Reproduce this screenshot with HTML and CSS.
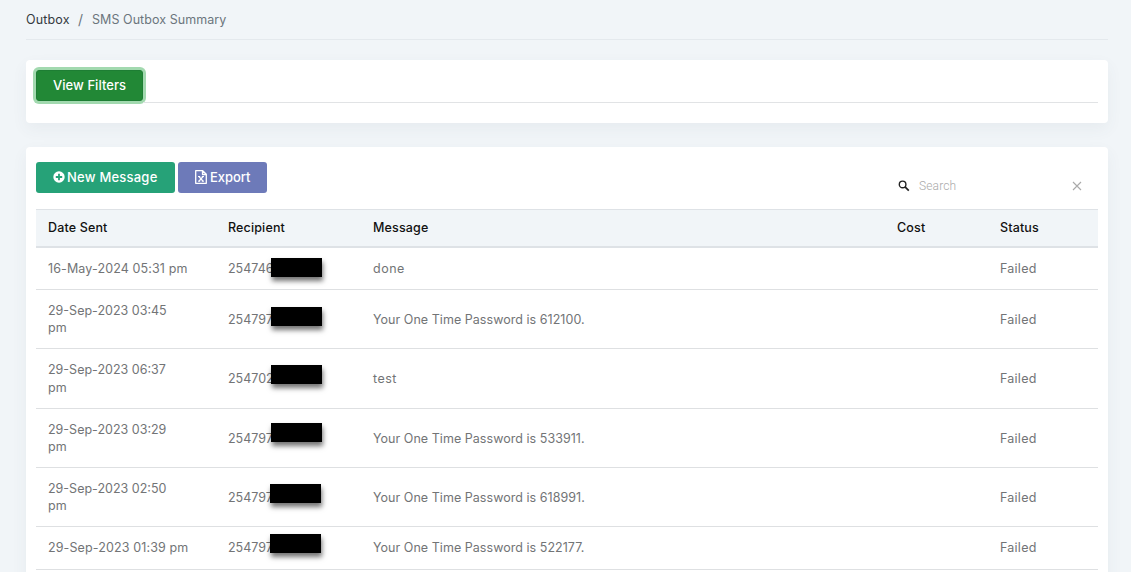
FILE: index.html
```html
<!DOCTYPE html>
<html lang="en">
<head>
<meta charset="utf-8">
<title>SMS Outbox Summary</title>
<link rel="stylesheet" href="styles.css">
</head>
<body>
<main class="page">
  <nav class="breadcrumb"><a class="crumb-root">Outbox</a><span class="crumb-sep">/</span><span class="crumb-current">SMS Outbox Summary</span></nav>

  <section class="card filters">
    <button class="btn btn-filter"><span>View Filters</span></button>
    <div class="rule"></div>
  </section>

  <section class="card outbox">
    <div class="toolbar">
      <button class="btn btn-new">
        <svg class="icon-plus" width="12" height="12" viewBox="0 0 12 12"><circle cx="6" cy="6" r="5.7" fill="#fff"/><path d="M6 2.8v6.4M2.8 6h6.4" stroke="#26a278" stroke-width="1.8"/></svg>
        <span class="new-label">New Message</span>
      </button>
      <button class="btn btn-export">
        <svg class="icon-file" width="12" height="14" viewBox="0 0 12 14" fill="none" stroke="#fff"><path d="M.7.7h7l3.6 3.6v9H.7zM7.5.7v3.8h3.8" stroke-width="1.3" stroke-linejoin="round"/><path d="M4 6.6l4 4.5M8 6.6l-4 4.5" stroke-width="1.4"/><path d="M3 6.5h2.2M6.8 6.5H9M3 11.2h2.2M6.8 11.2H9" stroke-width="1"/></svg>
        <span class="export-label">Export</span>
      </button>
      <div class="search">
        <svg class="icon-search" width="12" height="12" viewBox="0 0 12 12" fill="none" stroke="#222"><circle cx="4.6" cy="4.4" r="3.3" stroke-width="1.4"/><path d="M7 6.9l3.8 3.8" stroke-width="1.7"/></svg>
        <span class="search-text">Search</span>
        <svg class="icon-clear" width="10" height="10" viewBox="0 0 10 10" stroke="#aaa" stroke-width="1.1"><path d="M1 1l8 8M9 1L1 9"/></svg>
      </div>
    </div>

    <table class="messages">
      <colgroup><col class="c-date"><col class="c-recipient"><col class="c-message"><col class="c-cost"><col class="c-status"></colgroup>
      <thead>
        <tr><th>Date Sent</th><th>Recipient</th><th>Message</th><th>Cost</th><th>Status</th></tr>
      </thead>
      <tbody>
        <tr class="r42"><td><span class="date-one">16-May-2024 05:31 pm</span></td><td><div class="phone"><span>254746</span><i class="mask m1"></i></div></td><td><span class="word">done</span></td><td></td><td><span class="status">Failed</span></td></tr>
        <tr class="r59"><td><span class="date-two">29-Sep-2023 03:45<br>pm</span></td><td><div class="phone"><span>254797</span><i class="mask m2"></i></div></td><td><span class="msg">Your One Time Password is 612100.</span></td><td></td><td><span class="status">Failed</span></td></tr>
        <tr class="r60"><td><span class="date-two">29-Sep-2023 06:37<br>pm</span></td><td><div class="phone"><span>254702</span><i class="mask m3"></i></div></td><td><span class="word">test</span></td><td></td><td><span class="status">Failed</span></td></tr>
        <tr class="r59"><td><span class="date-two">29-Sep-2023 03:29<br>pm</span></td><td><div class="phone"><span>254797</span><i class="mask m4"></i></div></td><td><span class="msg">Your One Time Password is 533911.</span></td><td></td><td><span class="status">Failed</span></td></tr>
        <tr class="r59"><td><span class="date-two">29-Sep-2023 02:50<br>pm</span></td><td><div class="phone"><span>254797</span><i class="mask m5"></i></div></td><td><span class="msg">Your One Time Password is 618991.</span></td><td></td><td><span class="status">Failed</span></td></tr>
        <tr class="r43"><td><span class="date-one">29-Sep-2023 01:39 pm</span></td><td><div class="phone"><span>254797</span><i class="mask m6"></i></div></td><td><span class="msg">Your One Time Password is 522177.</span></td><td></td><td><span class="status">Failed</span></td></tr>
      </tbody>
    </table>
  </section>
</main>
</body>
</html>
```
FILE: styles.css
```css
* { box-sizing: border-box; }
body {
  margin: 0;
  height: 572px;
  overflow: hidden;
  background: #f1f5f8;
  color: #727476;
  font-family: Inter, "Open Sans", sans-serif;
  font-size: 12.5px;
  line-height: 17.5px;
}
.page { padding: 0 23px 0 26px; }
.breadcrumb {
  display: flex;
  height: 40px;
  padding-top: 11px;
  border-bottom: 1px solid #e4e9ed;
  color: #6c757d;
  white-space: nowrap;
}
.crumb-root { color: #343a40; width: 52px; letter-spacing: .15px; }
.crumb-sep { width: 14px; font-size: 14px; }
.crumb-current { letter-spacing: .05px; }
.card {
  background: #fff;
  border-radius: 4px;
  box-shadow: 0 6px 16px rgba(60, 80, 100, .06);
}
.filters { height: 63px; margin-top: 20px; padding: 10px 10px 0; display: flex; align-items: flex-start; }
.rule { flex: 1; height: 33px; border-bottom: 1px solid #e1e3e5; }
.btn {
  display: flex;
  align-items: center;
  height: 31px;
  padding: 0 0 1px 17px;
  border: 0;
  border-radius: 3px;
  color: #fff;
  font: 500 13px/18px Inter, sans-serif;
  white-space: nowrap;
}
.btn-filter { width: 107px; background: #228836; border: 1px solid #1e7e34; padding-left: 16px; letter-spacing: .05px; box-shadow: 0 0 0 3px #a2d9af; }
.outbox { height: 440px; margin-top: 24px; padding: 15px 10px 0; }
.toolbar { display: flex; height: 47px; gap: 3px; align-items: flex-start; }
.btn-new { width: 139px; background: #26a278; gap: 2px; letter-spacing: .22px; }
.btn-export { width: 89px; background: #6d7ab9; gap: 3px; letter-spacing: -.05px; }
.search { display: flex; align-items: center; margin-left: auto; width: 200px; height: 18px; margin-top: 15px; color: #aaa; }
.search-text { font: 300 12px/18px Roboto, sans-serif; letter-spacing: .15px; margin-left: 9px; flex: 1; }
.icon-clear { margin-right: 16px; }
.messages { width: 1062px; table-layout: fixed; border-collapse: separate; border-spacing: 0; }
.c-date { width: 180px; }
.c-recipient { width: 145px; }
.c-message { width: 524px; }
.c-cost { width: 103px; }
.c-status { width: 110px; }
th, td { padding: 0 0 0 12px; text-align: left; vertical-align: middle; white-space: nowrap; }
th { height: 39px; background: #f1f5f8; border-top: 1px solid #dee2e6; border-bottom: 2px solid #dee2e6; color: #111; font-weight: 500; letter-spacing: .15px; }
td { border-bottom: 1px solid #dee0e2; }
.r42 td { height: 42px; }
.r43 td { height: 43px; }
.r59 td { height: 59px; }
.r59 td:nth-child(n+2) { padding-top: 1px; }
.r60 td { height: 60px; }
.date-one { letter-spacing: .12px; }
.word { letter-spacing: .5px; }
.msg { letter-spacing: .04px; }
.status { letter-spacing: .25px; }
.phone { position: relative; height: 18px; }
.mask { position: absolute; left: 43px; width: 51px; height: 19px; background: #000; box-shadow: 1px 4px 5px rgba(0, 0, 0, .55); }
.m1 { top: -2px; }
.m2 { top: -4px; }
.m3 { top: -5px; }
.m4 { top: -7px; }
.m5 { top: -5px; left: 42px; }
.m6 { top: -5px; left: 42px; }
```
